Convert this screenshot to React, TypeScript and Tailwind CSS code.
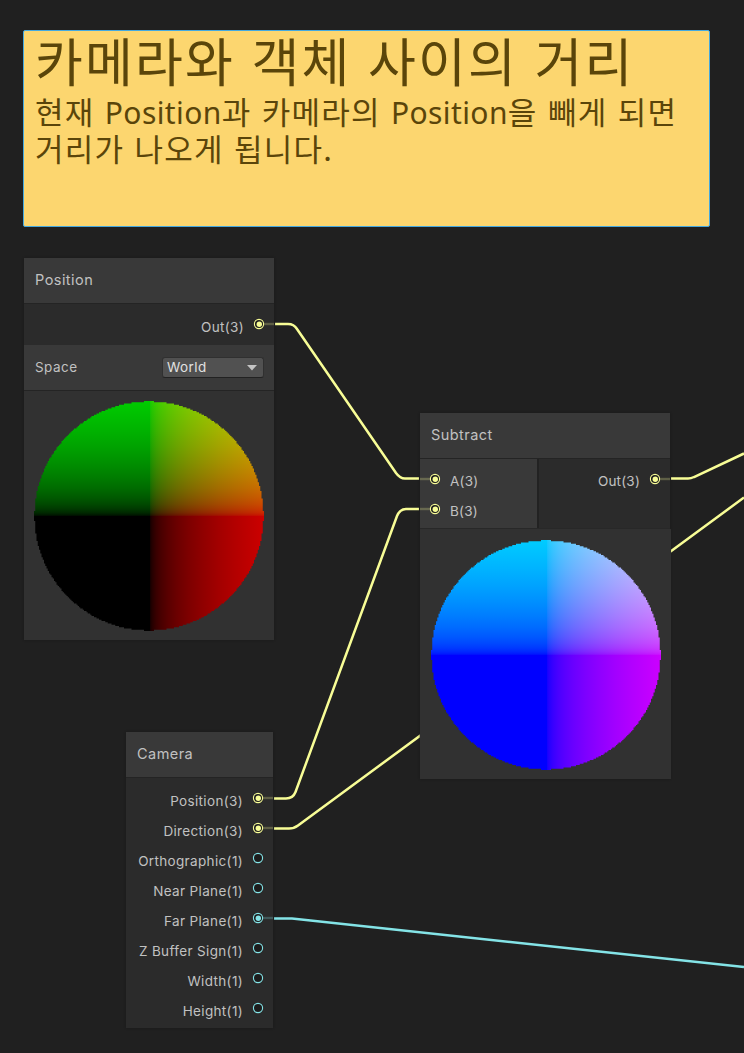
import React from "react";

const YELLOW = "#f8fd96";
const CYAN = "#84e4e7";
const STEPS = [0, 0.004, 0.015, 0.03, 0.06, 0.1, 0.16, 0.24, 0.34, 0.46, 0.6, 0.75, 0.88, 1];

// The preview is rendered without antialiasing, so its outline is stepped in small cells.
const CELLS = 184;
const CELL = 230 / CELLS;
const RADIUS = 91.6;
const DISC = Array.from({ length: CELLS }, (_, row) => {
  const dy = row + 0.5 - CELLS / 2;
  const half = Math.round(Math.sqrt(Math.max(0, RADIUS * RADIUS - dy * dy)));
  const x = (CELLS / 2 - half) * CELL;
  const w = half * 2 * CELL;
  return `M${x.toFixed(2)} ${(row * CELL).toFixed(2)}h${w.toFixed(2)}v${(CELL + 0.05).toFixed(2)}h${(-w).toFixed(2)}z`;
}).join("");

type PortProps = { color: string; linked?: boolean; side?: "left" | "right" };

function Port({ color, linked = false, side = "right" }: PortProps) {
  return (
    <svg className="block h-[12px] w-[30px] shrink-0" viewBox="0 0 30 12">
      {linked && side === "right" && <path d="M19 6H30" stroke={color} strokeOpacity="0.25" strokeWidth="2.4" />}
      {linked && side === "left" && <path d="M0 6H11" stroke={color} strokeOpacity="0.25" strokeWidth="2.4" />}
      <circle cx="15" cy="6" r="4.6" fill="#1d1d1d" stroke={color} strokeWidth="1.1" />
      {linked && <circle cx="15.3" cy="6.3" r="2.7" fill={color} />}
    </svg>
  );
}

function OutRow({ label, color, linked }: { label: string; color: string; linked?: boolean }) {
  return (
    <div className="flex h-[30px] items-start justify-end">
      <span className="pt-[5px] text-[13.5px] leading-[20px] tracking-[0.35px] whitespace-nowrap">{label}</span>
      <div className="pt-[6px]">
        <Port color={color} linked={linked} />
      </div>
    </div>
  );
}

function InRow({ label }: { label: string }) {
  return (
    <div className="flex h-[30px] items-start">
      <div className="pt-[6px]">
        <Port color={YELLOW} linked side="left" />
      </div>
      <span className="pt-[4px] text-[13.5px] leading-[20px] tracking-[0.2px]">{label}</span>
    </div>
  );
}

function Header({ title }: { title: string }) {
  return (
    <div className="flex h-[46px] items-center border-b border-[#242424] bg-[#393939] px-[11px] pb-[2px] text-[14.5px] tracking-[0.45px]">
      {title}
    </div>
  );
}

function Sphere({ id, base }: { id: string; base: string }) {
  return (
    <svg className="isolate block h-[230px] w-[230px]" viewBox="0 0 230 230">
      <defs>
        <clipPath id={`${id}-clip`}>
          <path d={DISC} />
        </clipPath>
        <linearGradient id={`${id}-r`} x1="0" y1="0" x2="1" y2="0">
          {STEPS.map((t) => (
            <stop key={t} offset={t} stopColor={`rgb(${Math.round(204 * Math.pow(t, 0.4545))},0,0)`} />
          ))}
        </linearGradient>
        <linearGradient id={`${id}-g`} x1="0" y1="1" x2="0" y2="0">
          {STEPS.map((t) => (
            <stop key={t} offset={t} stopColor={`rgb(0,${Math.round(204 * Math.pow(t, 0.4545))},0)`} />
          ))}
        </linearGradient>
      </defs>
      <g clipPath={`url(#${id}-clip)`}>
        <rect width="230" height="230" fill={base} />
        <rect x="115.5" y="0" width="114.5" height="230" fill={`url(#${id}-r)`} className="mix-blend-screen" />
        <rect x="0" y="0" width="230" height="115" fill={`url(#${id}-g)`} className="mix-blend-screen" />
      </g>
    </svg>
  );
}

function Edges() {
  return (
    <svg className="absolute inset-0" width="744" height="1053" viewBox="0 0 744 1053" fill="none" strokeWidth="2.5">
      <g stroke={YELLOW}>
        <path d="M275 324H288Q294 324 297 329L396 473Q400 478.5 405 478.5H419" />
        <path d="M274 798.5H286Q293 798.5 295.5 792L397 516Q400 509 406 509H419" />
        <path d="M274 828.5H289Q294 828.5 298 825.5L744 497.5" />
        <path d="M671 478.5H688Q691 478.5 694 477L744 453.5" />
      </g>
      <path d="M274 918.5H292L744 967" stroke={CYAN} />
    </svg>
  );
}

export default function App() {
  return (
    <main className="relative h-[1053px] w-[744px] overflow-hidden bg-[#202020] font-['Inter',sans-serif] text-[#c1c1c1]">
      <Edges />

      <section className="absolute top-[30px] left-[23px] h-[197px] w-[687px] rounded-[2px] border border-[#44a9df] bg-[#fcd66f] pl-[11px] font-['Noto_Sans_CJK_KR',sans-serif] text-[#5a450a]">
        <h1 className="h-[63px] pt-px text-[52px] leading-[56px] tracking-[2.15px] whitespace-nowrap [word-spacing:2.7px]">
          카메라와 객체 사이의 거리
        </h1>
        <p className="text-[31px] leading-[34.5px] tracking-[1.2px] whitespace-nowrap [word-spacing:2.2px]">
          현재 <span className="font-['Noto_Sans',sans-serif] text-[30px] tracking-[0.4px]">Position</span>과 카메라의{" "}
          <span className="font-['Noto_Sans',sans-serif] text-[30px] tracking-[0.4px]">Position</span>을 빼게 되면
          <br />
          거리가 나오게 됩니다.
        </p>
      </section>

      <section className="absolute top-[258px] left-[24px] w-[250px] bg-[#313131] shadow-[0_0_2px_#191919]">
        <Header title="Position" />
        <div className="h-[41px] bg-[#2b2b2b] pt-[8px]">
          <OutRow label="Out(3)" color={YELLOW} linked />
        </div>
        <div className="flex h-[46px] items-center justify-between border-b border-[#242424] bg-[#393939] pr-[10px] pl-[11px] text-[13.5px] tracking-[0.45px]">
          <span>Space</span>
          <div className="flex h-[21px] w-[102px] items-center justify-between rounded-[3px] border border-[#303030] border-b-[#222] bg-[#515151] pr-[6px] pl-[4px] text-[#e0e0e0]">
            <span>World</span>
            <svg width="10" height="6" viewBox="0 0 10 6">
              <path d="M0 0H10L5 5.5Z" fill="#c4c4c4" />
            </svg>
          </div>
        </div>
        <div className="flex h-[249px] justify-center pt-[9.5px]">
          <Sphere id="pos" base="#000000" />
        </div>
      </section>

      <section className="absolute top-[413px] left-[420px] w-[250px] bg-[#313131] shadow-[0_0_2px_#191919]">
        <Header title="Subtract" />
        <div className="flex h-[70px] border-b border-[#282828]">
          <div className="w-[119px] border-r-2 border-[#222] bg-[#393939] pt-[8px]">
            <InRow label="A(3)" />
            <InRow label="B(3)" />
          </div>
          <div className="flex-1 bg-[#2b2b2b] pt-[8px]">
            <div className="flex h-[30px] items-start justify-end">
              <span className="pt-[4px] text-[13.5px] leading-[20px] tracking-[0.2px]">Out(3)</span>
              <div className="pt-[6px]">
                <Port color={YELLOW} linked />
              </div>
            </div>
          </div>
        </div>
        <div className="-mr-px flex h-[250px] justify-center bg-[#313131] pt-[11px] pl-px">
          <Sphere id="sub" base="#0000ff" />
        </div>
      </section>

      <section className="absolute top-[732px] left-[126px] h-[296px] w-[147px] bg-[#2b2b2b] shadow-[0_0_2px_#191919]">
        <Header title="Camera" />
        <div className="pt-[8px]">
          <OutRow label="Position(3)" color={YELLOW} linked />
          <OutRow label="Direction(3)" color={YELLOW} linked />
          <OutRow label="Orthographic(1)" color={CYAN} />
          <OutRow label="Near Plane(1)" color={CYAN} />
          <OutRow label="Far Plane(1)" color={CYAN} linked />
          <OutRow label="Z Buffer Sign(1)" color={CYAN} />
          <OutRow label="Width(1)" color={CYAN} />
          <OutRow label="Height(1)" color={CYAN} />
        </div>
      </section>
    </main>
  );
}
